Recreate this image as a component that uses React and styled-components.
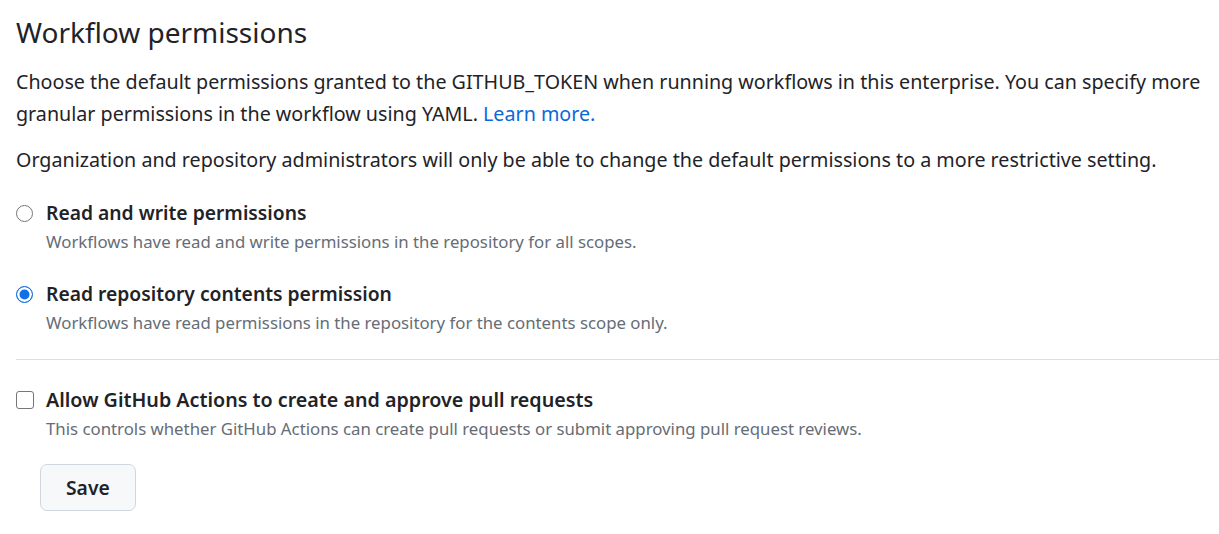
import React from "react";
import styled, { createGlobalStyle } from "styled-components";

const GlobalStyle = createGlobalStyle`
  * { box-sizing: border-box; }
  body {
    margin: 0;
    background: #ffffff;
    color: #1f2328;
    font-family: "Noto Sans", "Open Sans", sans-serif;
  }
`;

const Page = styled.div`
  padding: 10px 0 0 16px;
`;

const Title = styled.h2`
  margin: 0 0 12px;
  font-size: 28px;
  font-weight: 400;
  line-height: 44px;
`;

const Text = styled.p`
  margin: 0 0 14px;
  font-size: 19.7px;
  line-height: 32px;
  a {
    color: #0969da;
    text-decoration: none;
  }
`;

const Options = styled.div`
  display: flex;
  flex-direction: column;
  gap: 24px;
  margin-top: 23px;
`;

const Option = styled.label`
  display: grid;
  grid-template-columns: 17px 1fr;
  column-gap: 13px;
  align-items: center;
  cursor: pointer;
`;

const Radio = styled.span`
  width: 17px;
  height: 17px;
  border-radius: 50%;
  border: ${(p) => (p.$checked ? "1.5px solid #0f6fe8" : "1px solid #767676")};
  background: ${(p) => (p.$checked ? "#0f6fe8" : "#fff")};
  box-shadow: ${(p) => (p.$checked ? "inset 0 0 0 2.5px #fff" : "none")};
`;

const Check = styled.span`
  width: 18px;
  height: 18px;
  border-radius: 3px;
  border: 1.5px solid #767676;
  background: #fff;
`;

const Label = styled.span`
  font-size: ${(p) => (p.$wide ? "19.7px" : "19.3px")};
  font-weight: 600;
  line-height: 28px;
`;

const Note = styled.span`
  grid-column: 2;
  margin-top: 1px;
  font-size: 16.8px;
  line-height: 28px;
  color: #656d76;
`;

const Divider = styled.hr`
  border: 0;
  border-top: 1px solid #d8dee4;
  margin: 22px 0 26px;
`;

const Actions = styled.div`
  padding: 21px 0 0 24px;
`;

const Button = styled.button`
  height: 47px;
  padding: 0 25px;
  border-radius: 7px;
  border: 1px solid #d0d7de;
  background: #f6f8fa;
  color: #1f2328;
  font-family: inherit;
  font-size: 19.3px;
  font-weight: 600;
`;

export default function App() {
  return (
    <>
      <GlobalStyle />
      <Page>
        <Title>Workflow permissions</Title>
        <Text>
          Choose the default permissions granted to the GITHUB_TOKEN when running workflows in this enterprise. You can
          specify more granular permissions in the workflow using YAML. <a href="#">Learn more.</a>
        </Text>
        <Text>
          Organization and repository administrators will only be able to change the default permissions to a more
          restrictive setting.
        </Text>
        <Options>
          <Option>
            <Radio />
            <Label>Read and write permissions</Label>
            <Note>Workflows have read and write permissions in the repository for all scopes.</Note>
          </Option>
          <Option>
            <Radio $checked />
            <Label>Read repository contents permission</Label>
            <Note>Workflows have read permissions in the repository for the contents scope only.</Note>
          </Option>
        </Options>
        <Divider />
        <Option>
          <Check />
          <Label $wide>Allow GitHub Actions to create and approve pull requests</Label>
          <Note>This controls whether GitHub Actions can create pull requests or submit approving pull request reviews.</Note>
        </Option>
        <Actions>
          <Button>Save</Button>
        </Actions>
      </Page>
    </>
  );
}
